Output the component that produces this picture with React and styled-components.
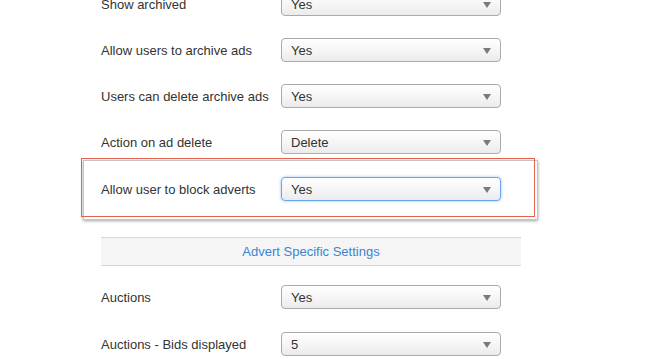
import React from 'react'
import styled, { createGlobalStyle } from 'styled-components'

const GlobalStyle = createGlobalStyle`
  html, body {
    margin: 0;
    padding: 0;
    background: #ffffff;
    overflow: hidden;
  }
  body {
    font-family: "Liberation Sans", Arial, Helvetica, sans-serif;
    font-size: 13px;
    color: #333333;
  }
`

const Page = styled.div`
  width: 659px;
  height: 359px;
  overflow: hidden;
`

const Form = styled.div`
  width: 420px;
  margin: -8px 0 0 101px;
  display: flex;
  flex-direction: column;
`

const Row = styled.div`
  display: flex;
  align-items: center;
  height: 24px;
  margin-bottom: ${({ gap }) => (gap != null ? gap : 22)}px;
`

const Label = styled.div`
  width: 180px;
  flex: none;
  padding-top: 2px;
  line-height: 16px;
  color: #333333;
`

const Select = styled.div`
  position: relative;
  box-sizing: border-box;
  width: 220px;
  height: 24px;
  padding: 1px 24px 0 9px;
  display: flex;
  align-items: center;
  border: 1px solid ${({ focused }) => (focused ? '#6aa4ec' : '#aaaaaa')};
  border-radius: 4px;
  background: linear-gradient(to bottom, #ffffff 0%, #f4f4f4 60%, #ebebeb 100%);
  box-shadow: ${({ focused }) =>
    focused ? '0 0 3px rgba(82, 150, 236, 0.6)' : '0 1px 0 rgba(255,255,255,0.6)'};
  color: #333333;
  line-height: 16px;
`

const Arrow = styled.span`
  position: absolute;
  right: 9px;
  top: 9px;
  width: 0;
  height: 0;
  border-left: 4px solid transparent;
  border-right: 4px solid transparent;
  border-top: 6px solid #7a7a7a;
`

const Highlight = styled.div`
  position: relative;
  margin: 6px -17px 17px -18px;
  padding: 16px 16px 18px 17px;
  border: 1px solid #c4c4c4;
  box-shadow: 0 1px 3px rgba(0, 0, 0, 0.35);
  box-sizing: border-box;
  height: 60px;

  ${Row} {
    margin-bottom: 0;
  }
`

const Marker = styled.div`
  position: absolute;
  top: -3px;
  left: -3px;
  right: 2px;
  bottom: 2px;
  border: 1px solid #e4604f;
  pointer-events: none;
`

const SectionHeader = styled.div`
  height: 27px;
  display: flex;
  align-items: center;
  justify-content: center;
  background: #f5f5f5;
  border-top: 1px solid #d6d6d6;
  border-bottom: 1px solid #d6d6d6;
  color: #3b85d3;
  margin-bottom: 19px;
`

const Field = ({ label, value, focused, gap }) => (
  <Row gap={gap}>
    <Label>{label}</Label>
    <Select focused={focused}>
      {value}
      <Arrow />
    </Select>
  </Row>
)

export default function App() {
  return (
    <Page>
      <GlobalStyle />
      <Form>
        <Field label="Show archived" value="Yes" />
        <Field label="Allow users to archive ads" value="Yes" />
        <Field label="Users can delete archive ads" value="Yes" />
        <Field label="Action on ad delete" value="Delete" gap={0} />
        <Highlight>
          <Marker />
          <Field label="Allow user to block adverts" value="Yes" focused />
        </Highlight>
        <SectionHeader>Advert Specific Settings</SectionHeader>
        <Field label="Auctions" value="Yes" gap={23} />
        <Field label="Auctions - Bids displayed" value="5" />
      </Form>
    </Page>
  )
}
